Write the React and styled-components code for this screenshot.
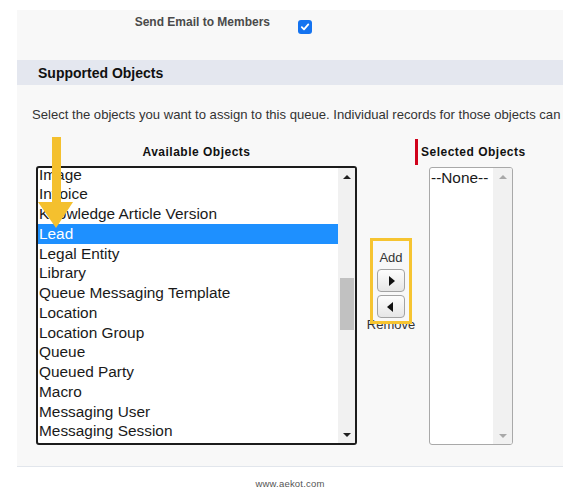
import React from "react";
import styled, { createGlobalStyle } from "styled-components";

const Global = createGlobalStyle`
  html, body { margin: 0; padding: 0; background: #ffffff; }
  body { font-family: "Liberation Sans", Arial, sans-serif; color: #222; }
`;

const Page = styled.div`
  width: 588px;
  height: 498px;
  padding-top: 10px;
  box-sizing: border-box;
  overflow: hidden;
`;

const Panel = styled.div`
  margin-left: 17px;
  width: 546px;
  background: #f8f8f8;
  border-bottom: 1px solid #e2e6ec;
  overflow: hidden;
  display: flex;
  flex-direction: column;
  padding-bottom: 21px;
`;

const FieldRow = styled.div`
  display: flex;
  align-items: flex-start;
  height: 50px;
`;

const FieldLabel = styled.div`
  width: 253px;
  text-align: right;
  font-size: 12px;
  font-weight: bold;
  color: #4a4a4a;
  line-height: 14px;
  padding-top: 5px;
`;

const CheckBox = styled.span`
  margin-left: 28px;
  margin-top: 10px;
  width: 14px;
  height: 14px;
  border-radius: 3px;
  background: #1473f0;
  display: flex;
  align-items: center;
  justify-content: center;
`;

const SectionHeader = styled.div`
  height: 25px;
  background: #e4e7ef;
  display: flex;
  align-items: center;
  padding-left: 21px;
  font-size: 14px;
  font-weight: bold;
  color: #111;
`;

const Description = styled.div`
  margin-top: 23px;
  padding-left: 15px;
  font-size: 13.1px;
  line-height: 14px;
  color: #333;
  white-space: nowrap;
`;

const Columns = styled.div`
  margin-top: 17px;
  display: flex;
  align-items: flex-start;
  padding-left: 19px;
`;

const LeftColumn = styled.div`
  position: relative;
  display: flex;
  flex-direction: column;
  width: 321px;
`;

const ColumnLabel = styled.div`
  height: 26px;
  line-height: 26px;
  font-size: 12px;
  font-weight: bold;
  letter-spacing: 0.5px;
  color: #111;
  text-align: ${(p) => (p.$center ? "center" : "left")};
`;

const ListBox = styled.div`
  display: flex;
  box-sizing: border-box;
  width: ${(p) => p.$w}px;
  height: ${(p) => p.$h}px;
  margin-top: ${(p) => p.$mt || 0}px;
  margin-left: ${(p) => p.$ml || 0}px;
  background: #fff;
  border: ${(p) => (p.$focus ? "2px solid #1c1c1c" : "1px solid #a9a9a9")};
  border-radius: 3px;
  overflow: hidden;
`;

const Items = styled.div`
  flex: 1;
  overflow: hidden;
  display: flex;
  flex-direction: column;
`;

const ItemsInner = styled.div`
  margin-top: ${(p) => p.$offset || 0}px;
  display: flex;
  flex-direction: column;
`;

const Item = styled.div`
  height: 19.75px;
  line-height: 19.75px;
  font-size: 15.4px;
  padding-left: 1px;
  white-space: nowrap;
  color: ${(p) => (p.$selected ? "#fff" : "#1a1a1a")};
  background: ${(p) => (p.$selected ? "#1e90ff" : "transparent")};
`;

const ScrollBar = styled.div`
  width: ${(p) => p.$w}px;
  background: #f1f1f1;
  display: flex;
  flex-direction: column;
  align-items: center;
`;

const ScrollArrow = styled.div`
  height: 17px;
  width: 100%;
  display: flex;
  align-items: center;
  justify-content: center;
  &::after {
    content: "";
    width: 0;
    height: 0;
    border-left: 4px solid transparent;
    border-right: 4px solid transparent;
    ${(p) =>
      p.$down
        ? `border-top: 4px solid ${p.$color};`
        : `border-bottom: 4px solid ${p.$color};`}
  }
`;

const Track = styled.div`
  flex: 1;
  width: 100%;
  display: flex;
  flex-direction: column;
`;

const Thumb = styled.div`
  margin-left: 2px;
  width: 14px;
  background: #c1c1c1;
`;

const MiddleColumn = styled.div`
  position: relative;
  margin-left: 9px;
  margin-top: 111px;
  width: 50px;
  display: flex;
  flex-direction: column;
  align-items: center;
`;

const SmallText = styled.div`
  font-size: 13px;
  line-height: 15px;
  color: #333;
  margin-top: ${(p) => p.$mt || 0}px;
`;

const MoveButton = styled.div`
  width: 28px;
  height: 23px;
  box-sizing: border-box;
  border: 1px solid #a3a3a3;
  border-radius: 4px;
  background: linear-gradient(#fdfdfd, #e6e6e6);
  display: flex;
  align-items: center;
  justify-content: center;
  margin-top: ${(p) => p.$mt}px;
  &::after {
    content: "";
    width: 0;
    height: 0;
    border-top: 5px solid transparent;
    border-bottom: 5px solid transparent;
    ${(p) =>
      p.$left
        ? "border-right: 6px solid #111; margin-right: 2px;"
        : "border-left: 6px solid #111; margin-left: 2px;"}
  }
`;

const Highlight = styled.div`
  position: absolute;
  left: 4px;
  top: -12px;
  width: 42px;
  height: 86px;
  box-sizing: border-box;
  border: 3px solid #f6c431;
`;

const RightColumn = styled.div`
  display: flex;
  flex-direction: column;
  margin-left: -1px;
`;

const RightHeader = styled.div`
  display: flex;
  align-items: center;
  height: 26px;
`;

const RedBar = styled.span`
  width: 3px;
  height: 26px;
  background: #d0021b;
  margin-right: 3px;
`;

const ArrowMark = styled.svg`
  position: absolute;
  left: 2px;
  top: -2px;
`;

const Footer = styled.div`
  margin-left: 17px;
  width: 546px;
  margin-top: 11px;
  text-align: center;
  font-size: 9.5px;
  line-height: 12px;
  color: #555;
  letter-spacing: 0.2px;
`;

const available = [
  "Image",
  "Invoice",
  "Knowledge Article Version",
  "Lead",
  "Legal Entity",
  "Library",
  "Queue Messaging Template",
  "Location",
  "Location Group",
  "Queue",
  "Queued Party",
  "Macro",
  "Messaging User",
  "Messaging Session",
];

export default function App() {
  return (
    <>
      <Global />
      <Page>
        <Panel>
          <FieldRow>
            <FieldLabel>Send Email to Members</FieldLabel>
            <CheckBox>
              <svg width="10" height="10" viewBox="0 0 10 10">
                <path d="M1.8 5.2 L4 7.4 L8.3 2.4" stroke="#fff" strokeWidth="1.8" fill="none" strokeLinecap="round" strokeLinejoin="round" />
              </svg>
            </CheckBox>
          </FieldRow>
          <SectionHeader>Supported Objects</SectionHeader>
          <Description>
            Select the objects you want to assign to this queue. Individual records for those objects can
          </Description>
          <Columns>
            <LeftColumn>
              <ColumnLabel $center>Available Objects</ColumnLabel>
              <ListBox $w={321} $h={279} $mt={1} $focus>
                <Items>
                  <ItemsInner $offset={-3.5}>
                    {available.map((name) => (
                      <Item key={name} $selected={name === "Lead"}>
                        {name}
                      </Item>
                    ))}
                  </ItemsInner>
                </Items>
                <ScrollBar $w={17}>
                  <ScrollArrow $color="#1f1f1f" />
                  <Track>
                    <Thumb style={{ marginTop: 93, height: 52 }} />
                  </Track>
                  <ScrollArrow $down $color="#1f1f1f" />
                </ScrollBar>
              </ListBox>
              <ArrowMark width="36" height="92" viewBox="0 0 36 92">
                <rect x="14" y="0" width="9" height="67" fill="#f4c02e" />
                <polygon points="0,65 35,65 18,91" fill="#f4c02e" />
              </ArrowMark>
            </LeftColumn>
            <MiddleColumn>
              <SmallText>Add</SmallText>
              <MoveButton $mt={4} />
              <MoveButton $mt={3} $left />
              <SmallText $mt={-1}>Remove</SmallText>
              <Highlight />
            </MiddleColumn>
            <RightColumn>
              <RightHeader>
                <RedBar />
                <ColumnLabel>Selected Objects</ColumnLabel>
              </RightHeader>
              <ListBox $w={84} $h={278} $mt={2} $ml={14}>
                <Items>
                  <ItemsInner $offset={0}>
                    <Item>--None--</Item>
                  </ItemsInner>
                </Items>
                <ScrollBar $w={19}>
                  <ScrollArrow $color="#a8a8a8" />
                  <Track />
                  <ScrollArrow $down $color="#a8a8a8" />
                </ScrollBar>
              </ListBox>
            </RightColumn>
          </Columns>
        </Panel>
        <Footer>www.aekot.com</Footer>
      </Page>
    </>
  );
}
